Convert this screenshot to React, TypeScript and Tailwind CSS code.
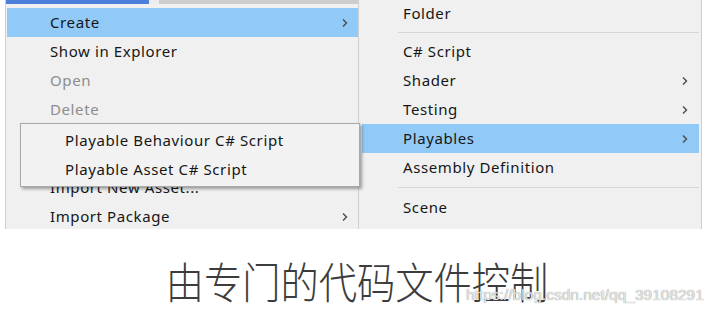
import React from "react";

type Item = {
  label?: string;
  disabled?: boolean;
  active?: boolean;
  arrow?: boolean;
  sep?: boolean;
  h?: string;
};

const Chevron = () => (
  <svg width="6" height="10" viewBox="0 0 6 10" className="shrink-0">
    <path d="M1 1.5 L4.5 5 L1 8.5" fill="none" stroke="#4a4a4a" strokeWidth="1.4" />
  </svg>
);

const leftItems: Item[] = [
  { label: "Create", active: true, arrow: true },
  { label: "Show in Explorer" },
  { label: "Open", disabled: true },
  { label: "Delete", disabled: true },
  { label: "Rename", disabled: true },
  { sep: true, h: "h-[20px]" },
  { label: "Import New Asset..." },
  { label: "Import Package", arrow: true },
];

const rightItems: Item[] = [
  { label: "Folder", h: "h-[27px]" },
  { sep: true, h: "h-[10px]" },
  { label: "C# Script" },
  { label: "Shader", arrow: true },
  { label: "Testing", arrow: true },
  { label: "Playables", active: true, arrow: true },
  { label: "Assembly Definition" },
  { sep: true, h: "h-[11px]" },
  { label: "Scene" },
];

const menuFont = { fontFamily: '"Noto Sans", "Open Sans", sans-serif' };

export default function App() {
  return (
    <div className="relative h-[313px] w-[714px] overflow-hidden bg-white" style={menuFont}>
      <div className="flex h-[229px] overflow-hidden">
        <div className="w-[5px] shrink-0 bg-white" />

        {/* left context menu */}
        <div className="w-[354px] shrink-0 border-x border-x-[#cfcfcf] bg-[#f0f0f0]">
          <div className="flex h-[4px]">
            <div className="w-[143px] bg-[#4b7fd9]" />
            <div className="w-[10px] bg-[#ececec]" />
            <div className="flex-1 bg-[#cdcdcd]" />
          </div>
          <div className="h-[4px]" />
          {leftItems.map((it, i) =>
            it.sep ? (
              <div key={i} className={`${it.h} flex items-center pl-[40px] pr-[2px]`}>
                <div className="h-px w-full bg-[#d5d5d5]" />
              </div>
            ) : (
              <div
                key={i}
                className={`ml-[1px] flex h-[29px] items-center pl-[43px] pr-[10px] text-[15px] tracking-[0.6px] ${
                  it.active ? "bg-[#91c9f7]" : ""
                } ${it.disabled ? "text-[#8d8d8d]" : "text-[#161616]"}`}
              >
                <span className="flex-1">{it.label}</span>
                {it.arrow && <Chevron />}
              </div>
            ),
          )}
        </div>

        {/* right submenu */}
        <div className="w-[343px] shrink-0 border-r border-r-[#cfcfcf] bg-[#f0f0f0]">
          {rightItems.map((it, i) =>
            it.sep ? (
              <div key={i} className={`${it.h} flex items-center pl-[39px] pr-[2px]`}>
                <div className="h-px w-full bg-[#d5d5d5]" />
              </div>
            ) : (
              <div
                key={i}
                className={`ml-[3px] mr-[2px] flex ${it.h ?? "h-[29px]"} items-center pl-[41px] pr-[11px] text-[15px] tracking-[0.6px] text-[#161616] ${
                  it.active ? "bg-[#91c9f7]" : ""
                }`}
              >
                <span className="flex-1">{it.label}</span>
                {it.arrow && <Chevron />}
              </div>
            ),
          )}
        </div>
      </div>

      {/* playables flyout */}
      <div className="absolute left-[20px] top-[123px] flex w-[340px] flex-col border border-[#a8a8a8] bg-[#f2f2f2] py-[2px] shadow-[2px_2px_3px_rgba(0,0,0,0.35)]">
        <div className="flex h-[29px] items-center pl-[44px] text-[15px] tracking-[0.6px] text-[#161616]">
          Playable Behaviour C# Script
        </div>
        <div className="flex h-[29px] items-center pl-[44px] text-[15px] tracking-[0.6px] text-[#161616]">
          Playable Asset C# Script
        </div>
      </div>

      {/* caption */}
      <div className="flex h-[84px] items-start justify-center pt-[27px]">
        <div
          className="origin-center scale-x-[0.89] text-[43px] font-light leading-[48px] text-[#3c3c3c]"
          style={{ fontFamily: '"Noto Sans CJK SC", sans-serif' }}
        >
          由专门的代码文件控制
        </div>
      </div>

      <div
        className="absolute left-[466px] top-[283px] text-[15.5px] text-[#e6e6e6] [text-shadow:0_0_1px_#7a7a7a]"
        style={{ fontFamily: '"Liberation Sans", Arial, sans-serif' }}
      >
        https://blog.csdn.net/qq_39108291
      </div>
    </div>
  );
}
